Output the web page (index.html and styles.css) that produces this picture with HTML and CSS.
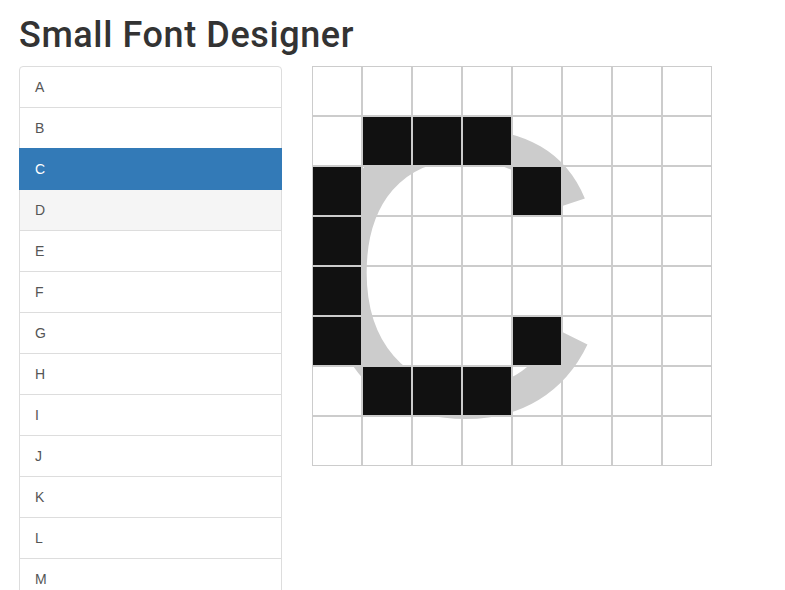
FILE: index.html
```html
<!doctype html>
<html>
    <head>
        <title>Small Font Designer</title>
        <meta charset="UTF-8">
        <link rel="stylesheet" href="styles.css">
    </head>
    <body>
        <div class="page">
          <h1>Small Font Designer</h1>
          <div class="row">
            <div class="list-group">
              <a href="#" class="list-group-item">A</a>
              <a href="#" class="list-group-item">B</a>
              <a href="#" class="list-group-item active">C</a>
              <a href="#" class="list-group-item hover">D</a>
              <a href="#" class="list-group-item">E</a>
              <a href="#" class="list-group-item">F</a>
              <a href="#" class="list-group-item">G</a>
              <a href="#" class="list-group-item">H</a>
              <a href="#" class="list-group-item">I</a>
              <a href="#" class="list-group-item">J</a>
              <a href="#" class="list-group-item">K</a>
              <a href="#" class="list-group-item">L</a>
              <a href="#" class="list-group-item">M</a>
              <a href="#" class="list-group-item">N</a>
              <a href="#" class="list-group-item">O</a>
            </div>

            <div class="editor">
              <span class="glyph">C</span>
              <div class="grid">
                <div class="cell"></div><div class="cell"></div><div class="cell"></div><div class="cell"></div><div class="cell"></div><div class="cell"></div><div class="cell"></div><div class="cell"></div>
                <div class="cell"></div><div class="cell on"></div><div class="cell on"></div><div class="cell on"></div><div class="cell"></div><div class="cell"></div><div class="cell"></div><div class="cell"></div>
                <div class="cell on"></div><div class="cell"></div><div class="cell"></div><div class="cell"></div><div class="cell on"></div><div class="cell"></div><div class="cell"></div><div class="cell"></div>
                <div class="cell on"></div><div class="cell"></div><div class="cell"></div><div class="cell"></div><div class="cell"></div><div class="cell"></div><div class="cell"></div><div class="cell"></div>
                <div class="cell on"></div><div class="cell"></div><div class="cell"></div><div class="cell"></div><div class="cell"></div><div class="cell"></div><div class="cell"></div><div class="cell"></div>
                <div class="cell on"></div><div class="cell"></div><div class="cell"></div><div class="cell"></div><div class="cell on"></div><div class="cell"></div><div class="cell"></div><div class="cell"></div>
                <div class="cell"></div><div class="cell on"></div><div class="cell on"></div><div class="cell on"></div><div class="cell"></div><div class="cell"></div><div class="cell"></div><div class="cell"></div>
                <div class="cell"></div><div class="cell"></div><div class="cell"></div><div class="cell"></div><div class="cell"></div><div class="cell"></div><div class="cell"></div><div class="cell"></div>
              </div>
            </div>
          </div>
        </div>
    </body>
</html>
```

FILE: styles.css
```css
*{
  margin:0;
  padding:0;
  box-sizing:border-box;
}
html,body{
  overflow:hidden;
}
body{
  font-family:"Liberation Sans", Arial, sans-serif;
  font-size:14px;
  line-height:20px;
  color:#333;
  background:#fff;
}
.page{
  padding:16px 19px;
}
h1{
  font-family:Roboto, "Liberation Sans", sans-serif;
  font-size:36px;
  line-height:1.1;
  font-weight:500;
  letter-spacing:0.6px;
  margin-bottom:10px;
}
.row{
  display:flex;
  align-items:flex-start;
  gap:30px;
}

.list-group{
  width:263px;
  display:flex;
  flex-direction:column;
}
.list-group-item{
  display:block;
  padding:10px 15px;
  margin-bottom:-1px;
  border:1px solid #ddd;
  background:#fff;
  color:#555;
  text-decoration:none;
}
.list-group-item:first-child{
  border-radius:4px 4px 0 0;
}
.list-group-item.hover{
  background:#f5f5f5;
}
.list-group-item.active{
  background:#337ab7;
  border-color:#337ab7;
  color:#fff;
  position:relative;
  z-index:2;
}

.editor{
  position:relative;
  width:400px;
  height:400px;
}
.glyph{
  position:absolute;
  left:-5px;
  top:7px;
  font-size:410px;
  line-height:400px;
  color:#ccc;
}
.grid{
  position:relative;
  display:grid;
  grid-template-columns:repeat(8, 50px);
  grid-template-rows:repeat(8, 50px);
}
.cell{
  border:1px solid #ccc;
}
.cell.on{
  background:#111;
}
```
